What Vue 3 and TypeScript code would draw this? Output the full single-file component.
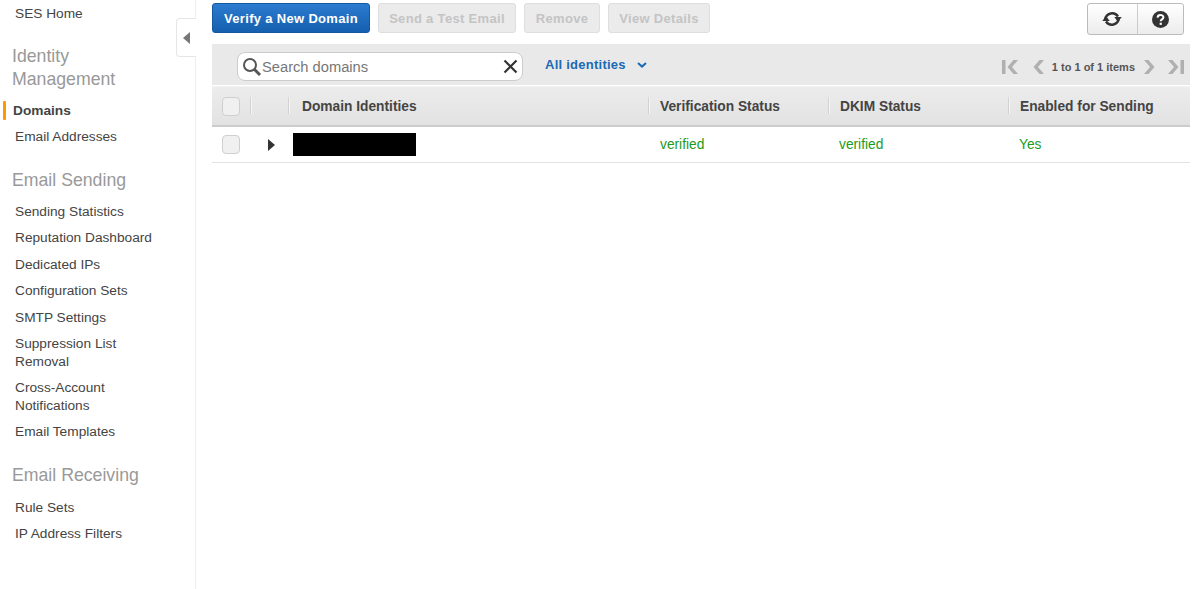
<script setup lang="ts">
interface NavItem {
  label: string;
  active?: boolean;
}

interface NavGroup {
  title: string;
  items: NavItem[];
}

const groups: NavGroup[] = [
  {
    title: "Identity Management",
    items: [{ label: "Domains", active: true }, { label: "Email Addresses" }],
  },
  {
    title: "Email Sending",
    items: [
      { label: "Sending Statistics" },
      { label: "Reputation Dashboard" },
      { label: "Dedicated IPs" },
      { label: "Configuration Sets" },
      { label: "SMTP Settings" },
      { label: "Suppression List Removal" },
      { label: "Cross-Account Notifications" },
      { label: "Email Templates" },
    ],
  },
  {
    title: "Email Receiving",
    items: [{ label: "Rule Sets" }, { label: "IP Address Filters" }],
  },
];

const disabledActions = [
  { label: "Send a Test Email", width: 138 },
  { label: "Remove", width: 76 },
  { label: "View Details", width: 102 },
];
</script>

<template>
  <div class="page">
    <aside class="sidebar">
      <a class="nav-item">SES Home</a>
      <section v-for="group in groups" :key="group.title" class="nav-group">
        <h3 class="nav-title">{{ group.title }}</h3>
        <a
          v-for="item in group.items"
          :key="item.label"
          class="nav-item"
          :class="{ active: item.active }"
        >{{ item.label }}</a>
      </section>
      <button class="collapse" aria-label="Collapse">
        <svg width="7" height="12" viewBox="0 0 7 12"><path d="M7 0v12L0 6z" fill="#777" /></svg>
      </button>
    </aside>

    <main class="content">
      <div class="actions">
        <button class="btn primary">Verify a New Domain</button>
        <button
          v-for="action in disabledActions"
          :key="action.label"
          class="btn disabled"
          :style="{ width: action.width + 'px' }"
        >{{ action.label }}</button>
        <div class="icon-group">
          <button class="icon-btn refresh" aria-label="Refresh">
            <svg width="20" height="20" viewBox="0 0 20 20">
              <path d="M3.200 10.500A7 7 0 0 1 16 7.500" fill="none" stroke="#333" stroke-width="2.400" />
              <path d="M12.300 8h7.400l-3.700 5z" fill="#333" />
              <path d="M16.800 9.500A7 7 0 0 1 4 12.500" fill="none" stroke="#333" stroke-width="2.400" />
              <path d="M0.300 12h7.400L4 7z" fill="#333" />
            </svg>
          </button>
          <button class="icon-btn help" aria-label="Help">
            <svg width="17" height="17" viewBox="0 0 18 18">
              <circle cx="9" cy="9" r="9" fill="#333" />
              <path d="M5.900 7a3 3 0 0 1 3.100-2.700c1.900 0 3.100 1 3.100 2.400 0 2.200-2.900 2.100-2.900 4.200" fill="none" stroke="#fff" stroke-width="2.100" />
              <rect x="8.100" y="12.400" width="2.300" height="2.300" fill="#fff" />
            </svg>
          </button>
        </div>
      </div>

      <div class="toolbar">
        <div class="search">
          <svg width="20" height="20" viewBox="0 0 20 20" class="search-icon">
            <circle cx="8" cy="8" r="6" fill="none" stroke="#555" stroke-width="2" />
            <path d="M12.500 12.500l5.500 5.500" stroke="#555" stroke-width="3" />
          </svg>
          <span class="search-text">Search domains</span>
          <svg width="15" height="15" viewBox="0 0 15 15" class="clear-icon">
            <path d="M1.500 1.500l12 12M13.500 1.500l-12 12" stroke="#333" stroke-width="2.200" />
          </svg>
        </div>
        <a class="filter">All identities
          <svg width="10" height="6" viewBox="0 0 10 6"><path d="M1 1l4 3.600L9 1" fill="none" stroke="#1b6ab5" stroke-width="2" /></svg>
        </a>
        <div class="pager">
          <svg width="16" height="14" viewBox="0 0 16 14"><path d="M0 0h3.500v14H0zM16 0l-6 7 6 7h-4.500l-6-7 6-7z" fill="#b0b0b0" /></svg>
          <svg class="prev" width="11" height="14" viewBox="0 0 11 14"><path d="M11 0L5 7l6 7H6.500L0.500 7l6-7z" fill="#b0b0b0" /></svg>
          <span class="pager-text">1 to 1 of 1 items</span>
          <svg width="11" height="14" viewBox="0 0 11 14"><path d="M0 0l6 7-6 7h4.500l6-7-6-7z" fill="#b0b0b0" /></svg>
          <svg class="last" width="16" height="14" viewBox="0 0 16 14"><path d="M16 0h-3.500v14H16zM0 0l6 7-6 7h4.500l6-7-6-7z" fill="#b0b0b0" /></svg>
        </div>
      </div>

      <div class="grid head">
        <div class="cell check"><span class="checkbox"></span></div>
        <div class="cell expand sep"></div>
        <div class="cell sep pad first">Domain Identities</div>
        <div class="cell sep pad">Verification Status</div>
        <div class="cell sep pad">DKIM Status</div>
        <div class="cell sep pad">Enabled for Sending</div>
      </div>
      <div class="grid row">
        <div class="cell check"><span class="checkbox"></span></div>
        <div class="cell expand">
          <svg width="7" height="12" viewBox="0 0 7 12"><path d="M0 0v12l7-6z" fill="#333" /></svg>
        </div>
        <div class="cell"><span class="redacted"></span></div>
        <div class="cell pad ok">verified</div>
        <div class="cell ok status">verified</div>
        <div class="cell ok status">Yes</div>
      </div>
    </main>
  </div>
</template>

<style scoped>
.page {
  display: flex;
  height: 589px;
  overflow: hidden;
  font-family: "Liberation Sans", Arial, sans-serif;
  color: #444;
}

.sidebar {
  position: relative;
  box-sizing: border-box;
  flex: 0 0 196px;
  border-right: 1px solid #eee;
  padding-right: 32px;
}

.nav-group {
  margin-top: 18.5px;
}

.nav-group:first-of-type {
  margin-top: 18px;
}

.nav-title {
  margin: 0 0 6.5px 12px;
  font-size: 17.700px;
  font-weight: 400;
  line-height: 23px;
  color: #999;
}

.nav-group:last-of-type .nav-title {
  margin-bottom: 7.5px;
}

.nav-item {
  display: block;
  padding: 4.5px 0 4.5px 15px;
  font-size: 13.700px;
  line-height: 17.5px;
  color: #444;
}

.nav-item.active {
  position: relative;
  padding-left: 13px;
  font-weight: 700;
}

.nav-item.active::before {
  content: "";
  position: absolute;
  left: 3px;
  top: 4px;
  bottom: 4px;
  width: 3px;
  border-radius: 1px;
  background: #f90;
}

.collapse {
  position: absolute;
  top: 18px;
  right: -1px;
  display: flex;
  align-items: center;
  justify-content: center;
  width: 20px;
  height: 39px;
  padding: 0;
  border: 1px solid #e6e6e6;
  border-right: 0;
  border-radius: 4px 0 0 4px;
  background: #fff;
}

.content {
  flex: 1;
  min-width: 0;
  padding: 3px 10px 0 16px;
}

.actions {
  display: flex;
  gap: 8px;
  height: 30px;
  margin-bottom: 11px;
}

.btn {
  height: 30px;
  padding: 0;
  border-radius: 3px;
  font-family: inherit;
  font-size: 13px;
  font-weight: 700;
  letter-spacing: 0.32px;
}

.btn.primary {
  width: 158px;
  border: 1px solid #15589f;
  background: linear-gradient(#2b7bd0, #1560ae);
  color: #fff;
}

.btn.disabled {
  border: 1px solid #dedede;
  background: #ebebeb;
  color: #c4c4c4;
}

.icon-group {
  display: flex;
  height: 30px;
  margin-left: auto;
  margin-right: 6px;
  border: 1px solid #bbb;
  border-radius: 3px;
  background: linear-gradient(#fff, #ececec);
}

.icon-btn {
  display: flex;
  align-items: center;
  justify-content: center;
  width: 49px;
  padding: 0;
  border: 0;
  background: transparent;
}

.icon-btn.refresh {
  padding-right: 2px;
}

.icon-btn.help {
  width: 46px;
  border-left: 1px solid #ccc;
}

.toolbar {
  display: flex;
  align-items: center;
  box-sizing: border-box;
  height: 41px;
  padding-top: 4px;
  background: #e9e9e9;
}

.search {
  display: flex;
  align-items: center;
  box-sizing: border-box;
  width: 286px;
  height: 29px;
  margin-left: 25px;
  padding: 0 4px;
  border: 1px solid #ccc;
  border-radius: 8px;
  background: #fff;
}

.search-icon {
  flex: none;
}

.search-text {
  flex: 1;
  font-size: 14.700px;
  color: #777;
}

.clear-icon {
  flex: none;
}

.filter {
  display: flex;
  align-items: center;
  gap: 11px;
  margin: -4px 0 0 22px;
  font-size: 13px;
  font-weight: 700;
  letter-spacing: 0.25px;
  color: #1b6ab5;
}

.pager {
  display: flex;
  align-items: center;
  margin-left: auto;
  margin-right: 6px;
}

.prev {
  margin-left: 15px;
}

.pager-text {
  margin: 0 9px 0 8px;
  font-size: 11px;
  font-weight: 700;
  color: #555;
}

.last {
  margin-left: 13px;
}

.grid {
  display: grid;
  grid-template-columns: 39px 38px 360px 180px 180px 1fr;
}

.head {
  box-sizing: border-box;
  height: 41px;
  margin-top: 1px;
  border-top: 1px solid #f2f2f2;
  border-bottom: 2px solid #ccc;
  background: linear-gradient(#ececec, #e2e2e2);
  font-size: 13.750px;
  font-weight: 700;
}

.row {
  box-sizing: border-box;
  height: 36px;
  border-bottom: 1px solid #e2e2e2;
  font-size: 13.750px;
}

.cell {
  display: flex;
  align-items: center;
  min-width: 0;
}

.check {
  padding-left: 10px;
}

.expand {
  padding-left: 17px;
}

.pad {
  padding-left: 11px;
}

.pad.first {
  padding-left: 13px;
}

.status {
  padding-left: 10px;
}

.sep {
  position: relative;
}

.sep::before {
  content: "";
  position: absolute;
  left: -1px;
  top: 10px;
  bottom: 11px;
  width: 1px;
  background: #d2d2d2;
  box-shadow: 1px 0 0 #f5f5f5;
}

.checkbox {
  box-sizing: border-box;
  width: 18px;
  height: 19px;
  border: 1px solid #cfcfcf;
  border-radius: 4px;
  background: #f0f0f0;
}

.redacted {
  display: block;
  width: 123px;
  height: 23px;
  margin-left: 4px;
  background: #000;
}

.ok {
  color: #1d9b1d;
}
</style>
